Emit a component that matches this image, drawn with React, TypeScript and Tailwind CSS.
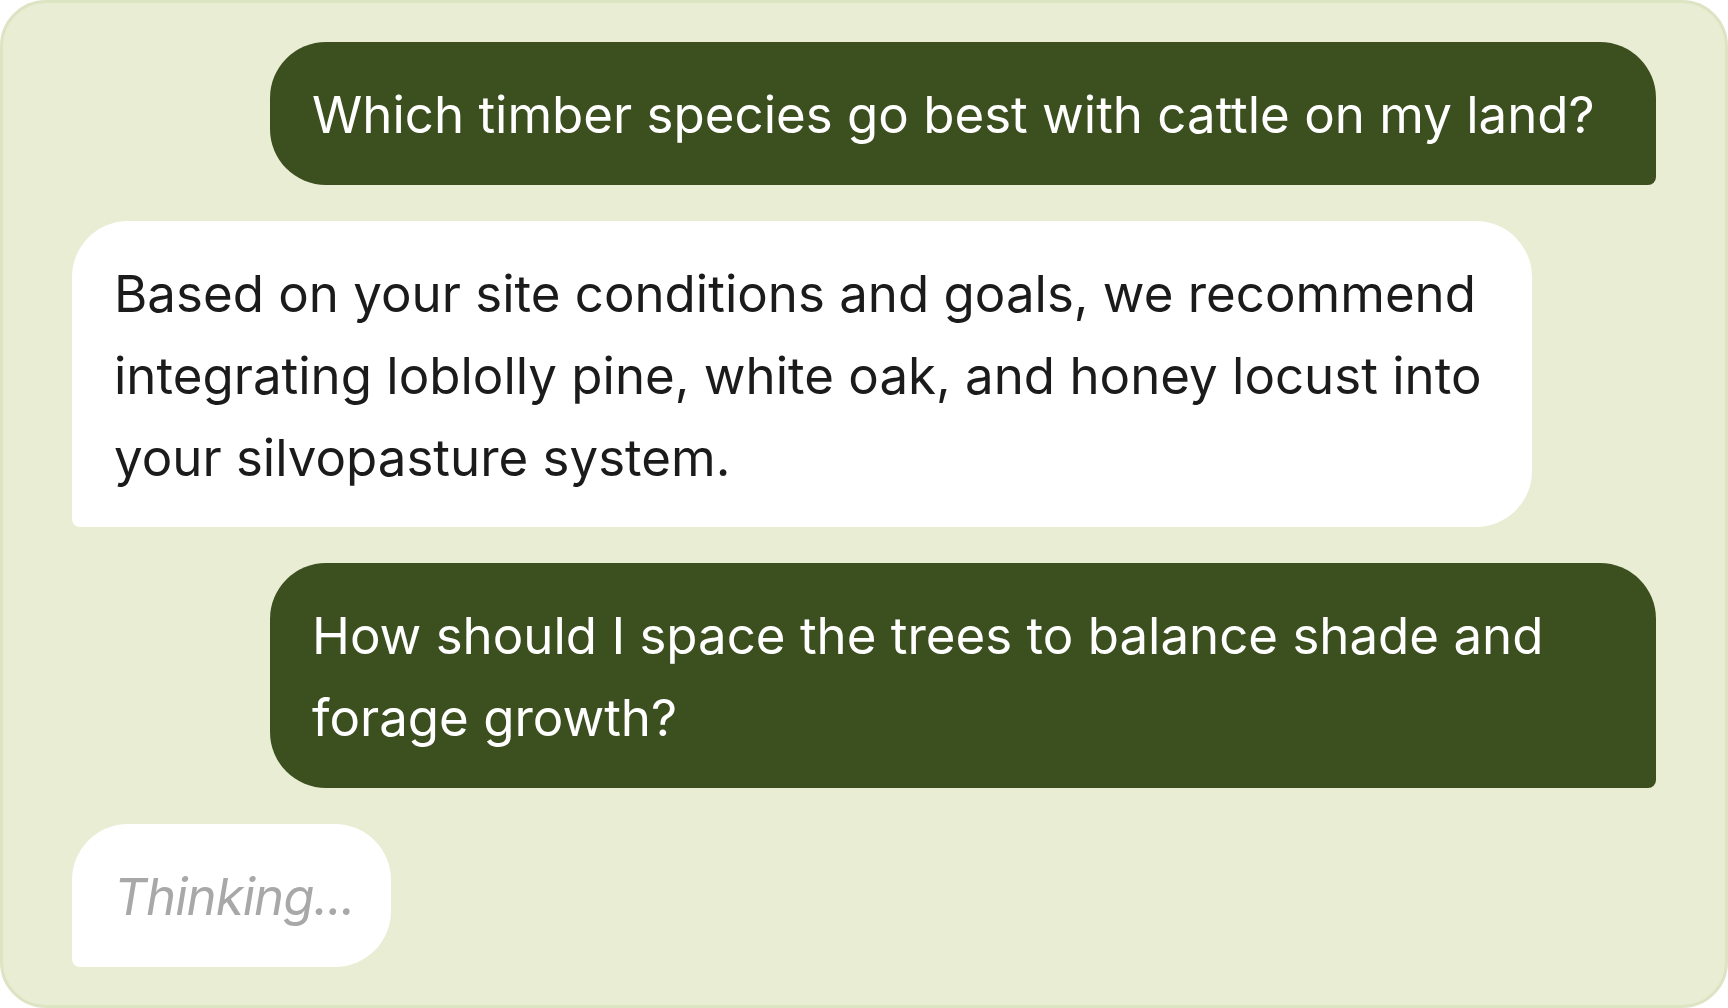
import React from "react";

export default function App() {
  return (
    <div className="w-full h-screen bg-white">
      <div
        className="w-full h-full bg-[#e8edd3] border-[3px] border-[#dde4c4] rounded-[46px] px-[69px] py-[39px] flex flex-col gap-[36px] text-[51px] leading-[82px]"
        style={{ fontFamily: "Inter, 'Noto Sans', sans-serif" }}
      >
        <div className="self-end w-[1386px] bg-[#3c4f1f] text-white rounded-[56px] rounded-br-[8px] px-[42px] pt-[32px] pb-[29px]">
          Which timber species go best with cattle on my land?
        </div>
        <div className="self-start w-[1460px] bg-white text-[#1b1b1b] rounded-[56px] rounded-bl-[8px] px-[42px] pt-[32px] pb-[28px]">
          Based on your site conditions and goals, we recommend integrating loblolly pine, white oak, and honey locust into your silvopasture system.
        </div>
        <div className="self-end w-[1386px] bg-[#3c4f1f] text-white rounded-[56px] rounded-br-[8px] px-[42px] pt-[32px] pb-[29px]">
          How should I space the trees to balance shade and forage growth?
        </div>
        <div className="self-start w-[319px] bg-white text-[#a8a8a8] italic tracking-[-1px] rounded-[56px] rounded-bl-[8px] pl-[42px] pt-[32px] pb-[29px] whitespace-nowrap">
          Thinking...
        </div>
      </div>
    </div>
  );
}
